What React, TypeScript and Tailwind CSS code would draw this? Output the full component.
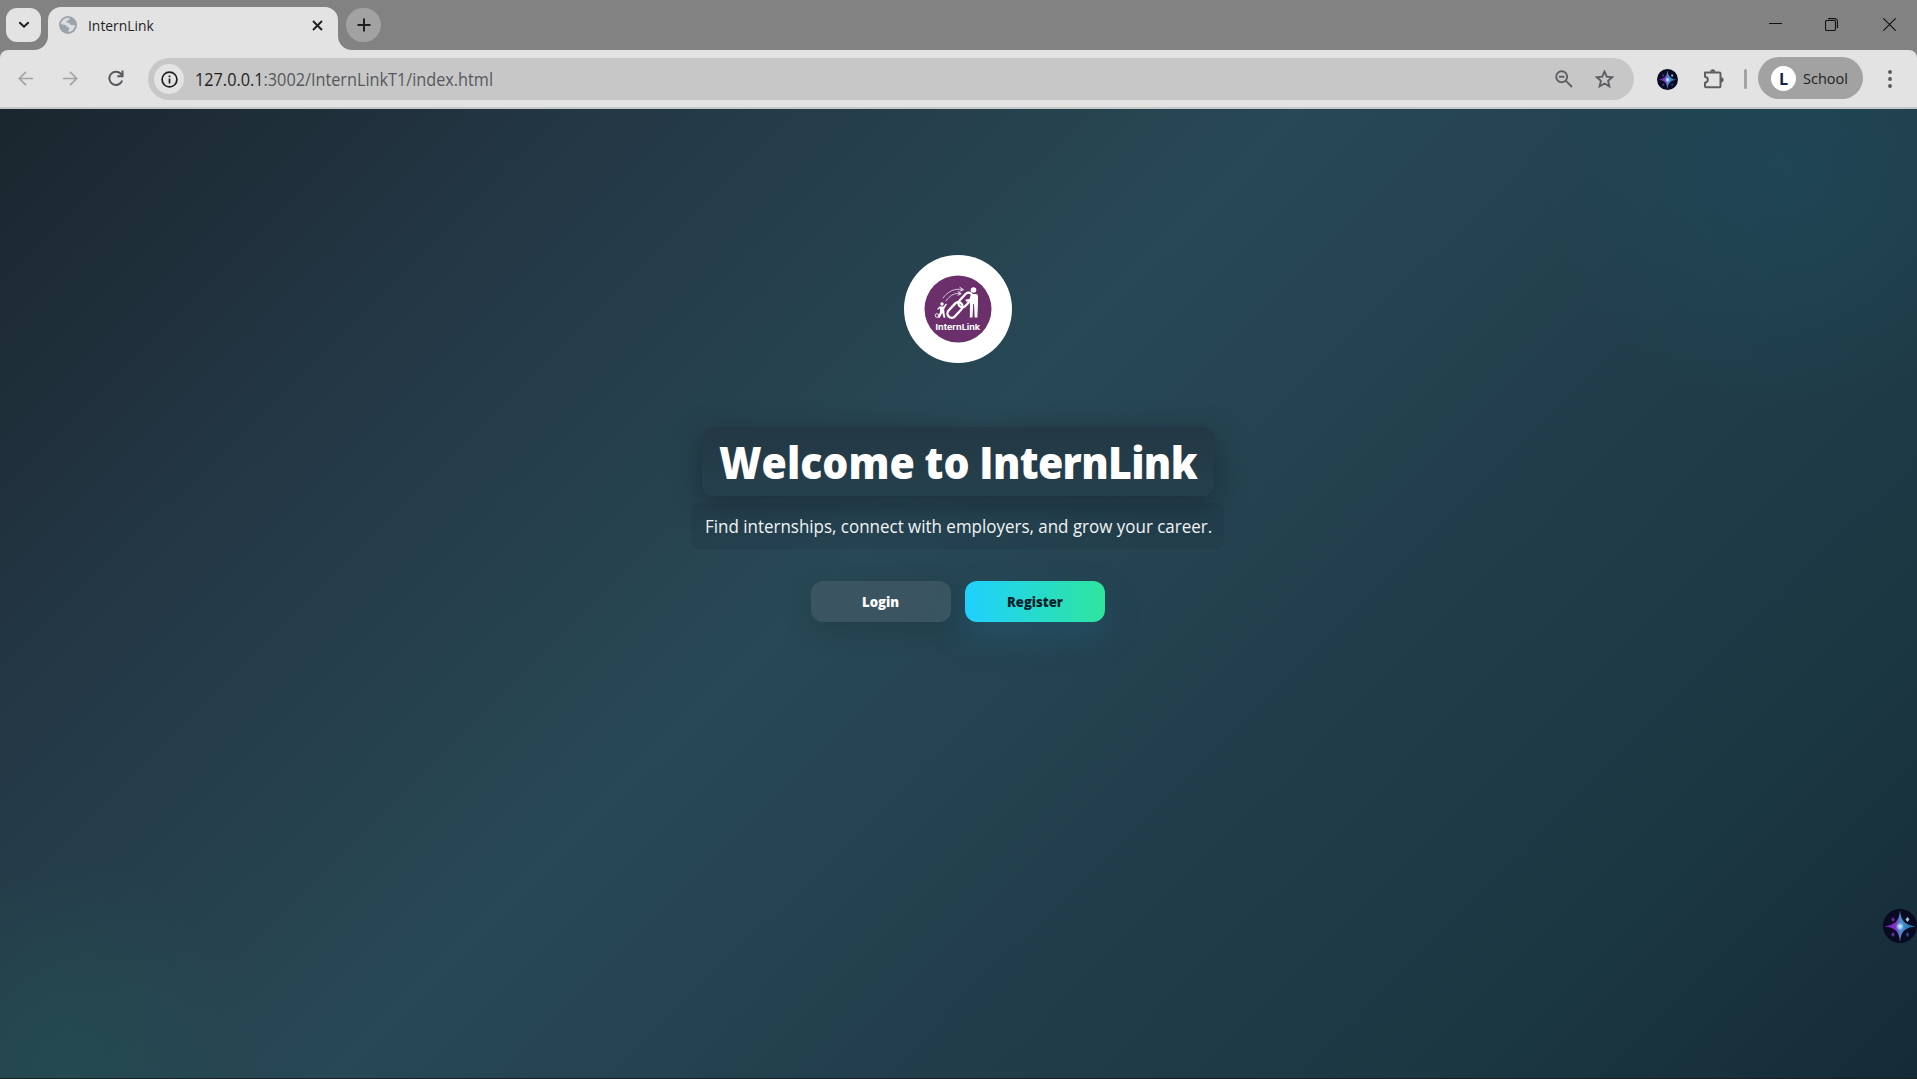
import React from "react";

const UI = "font-['Open_Sans','Noto_Sans',sans-serif]";

// Text fitted to a fixed advance width
function Fit({ w, size, weight, color, children, className = "" }: { w: number; size: number; weight: number; color: string; children: React.ReactNode; className?: string }) {
  const ref = React.useRef<HTMLSpanElement>(null);
  const [scale, setScale] = React.useState(1);
  React.useLayoutEffect(() => {
    const measure = () => ref.current && setScale(w / ref.current.offsetWidth);
    measure();
    document.fonts?.ready.then(measure);
  }, [w]);
  return (
    <span className={`block whitespace-nowrap ${className}`} style={{ width: w }}>
      <span ref={ref} className="inline-block origin-left" style={{ fontSize: size, fontWeight: weight, color, transform: `scaleX(${scale})` }}>
        {children}
      </span>
    </span>
  );
}

function Spark({ size }: { size: number }) {
  return (
    <svg width={size} height={size} viewBox="0 0 34 34" className="block">
      <defs>
        <linearGradient id="spark" x1="0" y1="0" x2="1" y2="0">
          <stop offset="0" stopColor="#7a1fb5" />
          <stop offset=".4" stopColor="#8436c4" />
          <stop offset=".52" stopColor="#4a93c8" />
          <stop offset="1" stopColor="#1a62a8" />
        </linearGradient>
        <radialGradient id="glow">
          <stop offset="0" stopColor="#e0f6ff" />
          <stop offset=".5" stopColor="#9fd4f5" stopOpacity=".8" />
          <stop offset="1" stopColor="#6aa8f0" stopOpacity="0" />
        </radialGradient>
      </defs>
      <circle cx="17" cy="17" r="17" fill="#070a20" />
      <path d="M17 1.500C18 12 22 16 33 17.500C22 18.500 18 22 17 33C16 22 12 18.500 1 17.500C12 16 16 12 17 1.500Z" fill="url(#spark)" />
      <circle cx="17" cy="17.500" r="4.500" fill="url(#glow)" />
      <path d="M10 8l2 2.500-2 2.500-2-2.500zM10 23l2 2.500-2 2.500-2-2.500z" fill="#5a2a90" />
      <path d="M24.500 8l2 2.500-2 2.500-2-2.500z" fill="#9cc4dc" />
      <path d="M24.500 23l2 2.500-2 2.500-2-2.500z" fill="#2e3f8e" />
    </svg>
  );
}

function Logo() {
  return (
    <div className="flex size-[108px] items-center justify-center rounded-full bg-white">
      <svg width="68" height="68" viewBox="0 0 68 68">
        <circle cx="34" cy="34" r="33.500" fill="#6b2f6b" />
        <g fill="none" stroke="#fff" strokeLinecap="round">
          <g transform="translate(41.500 25) rotate(-47)" strokeWidth="2.300">
            <rect x="-8.500" y="-4" width="17" height="8" rx="4" />
          </g>
          <g transform="translate(31 35) rotate(-47)" strokeWidth="2.300">
            <rect x="-9" y="-4.300" width="18" height="8.600" rx="4.300" />
          </g>
          <path d="M19 23C24 16.500 30 13.500 37.500 14.500M22 26C26 20.500 30 18 35.500 18.500" strokeWidth=".7" strokeDasharray="2.500 .7" />
          <path d="M36 12.500l3.500 2.200-3.500 1.500M34 16.800l3.200 1.900-3.200 1.500" strokeWidth=".9" />
          <circle cx="13" cy="40.500" r="1.800" strokeWidth=".9" />
        </g>
        <circle cx="49.500" cy="15" r="2.800" fill="#fff" />
        <path d="M47 19h5q2 0 2 2v7l-.6 14.500h-2.700l-.7-13.500h-.8l-.7 13.500h-2.700L46 27l-4-.5-.5-2 4-.5z" fill="#fff" />
        <circle cx="18" cy="29" r="1.700" fill="#fff" />
        <path d="M15.500 31.500h4l2.500-3 .9.800-2.700 4.700.2 3.500 1 5.300h-1.800l-1.400-5-2.400 5H14l2-6v-3.500l-2 1.500-.8-.8z" fill="#fff" />
        <text x="33.800" y="54.500" textAnchor="middle" fill="#fff" fontFamily="Inter, Lato, sans-serif" fontWeight="700" fontSize="7.800" textLength="44.500" lengthAdjust="spacingAndGlyphs">InternLink</text>
      </svg>
    </div>
  );
}

function TabStrip() {
  return (
    <div className="flex h-[50px] w-full bg-[#828282]">
      <button className="mt-2 ml-1.5 flex h-[34px] w-[35px] items-center justify-center rounded-[11px] bg-[#e3e3e3]">
        <svg width="12" height="8" viewBox="0 0 12 8" fill="none" stroke="#1f1f1f" strokeWidth="2"><path d="M1.300 1.200 6 5.700l4.700-4.500" /></svg>
      </button>
      <div className="relative mt-[7px] ml-[7px] flex h-[43px] w-[290px] items-start rounded-t-[13px] bg-[#e3e3e3]">
        <svg className="absolute bottom-0 -left-[14px]" width="14" height="14"><path d="M14 0v14H0A14 14 0 0 0 14 0z" fill="#e3e3e3" /></svg>
        <svg className="absolute -right-[14px] bottom-0" width="14" height="14"><path d="M0 0v14h14A14 14 0 0 1 0 0z" fill="#e3e3e3" /></svg>
        <svg className="mt-[9px] ml-[11px]" width="18" height="18" viewBox="0 0 18 18">
          <circle cx="9" cy="9" r="9" fill="#9aa2ab" />
          <path d="M9.500 1.800c1.700.3 1.400 1.300.2 1.900-.8.400-.5 1.300-1.500 1.500-1 .2-1.400.7-.6 1.300.9.600 3.200.2 3.700 1.700.4 1.200 1.700.8 3.400.7l1.300.3c-.3 3.500-2.700 6.200-6 6.800l-.7-1c-.2-1 1-1.500 1-2.600 0-1.200-1.500-1.100-2.200-1.700-.8-.7-.6-1.500-1.900-1.700L2 8.300C2.200 4.700 5.500 1.700 9.500 1.800z" fill="#dadcdf" />
        </svg>
        <div className="ml-[11px] flex h-9 items-center"><Fit w={66} size={14.500} weight={400} color="#1f1f1f">InternLink</Fit></div>
        <svg className="mt-[13px] ml-[158px]" width="11" height="11" viewBox="0 0 11 11" stroke="#1f1f1f" strokeWidth="1.900"><path d="m1 1 9 9m0-9-9 9" /></svg>
      </div>
      <button className="mt-2 ml-2 flex h-[34px] w-[35px] items-center justify-center rounded-full bg-[#a2a2a2]">
        <svg width="14" height="14" viewBox="0 0 14 14" stroke="#1f1f1f" strokeWidth="2"><path d="M7 .5v13M.5 7h13" /></svg>
      </button>
      <div className="mt-4 mr-[21px] ml-auto flex items-start">
        <svg className="mt-[7px]" width="13" height="1"><path d="M0 .5h13" stroke="#111" /></svg>
        <svg className="mt-[2px] ml-[43px]" width="13" height="13" viewBox="0 0 13 13" fill="none" stroke="#111" strokeWidth="1.100"><rect x=".5" y="2.500" width="10" height="10" rx="1.500" /><path d="M3 .6h6.500a3 3 0 0 1 3 3V10" /></svg>
        <svg className="mt-[2px] ml-[45px]" width="13" height="13" viewBox="0 0 13 13" stroke="#111" strokeWidth="1.100"><path d="m.3.3 12.400 12.400m0-12.400L.3 12.700" /></svg>
      </div>
    </div>
  );
}

function Toolbar() {
  return (
    <div className="h-[59px] bg-[#828282]">
      <div className="flex h-full items-start rounded-t-[8px] border-b-2 border-[#c5c7c7] bg-[#e3e3e3]">
        <svg className="mt-[21px] ml-[18px]" width="15" height="15" viewBox="0 0 15 15" fill="none" stroke="#a3a3a3" strokeWidth="1.700"><path d="M15 7.500H1.500M8 .8 1.300 7.500 8 14.200" /></svg>
        <svg className="mt-[21px] ml-[30px]" width="15" height="15" viewBox="0 0 15 15" fill="none" stroke="#a3a3a3" strokeWidth="1.700"><path d="M0 7.500h13.500M7 .8l6.700 6.700L7 14.200" /></svg>
        <svg className="mt-[20px] ml-[30px]" width="16" height="17" viewBox="0 0 16 17" fill="none" stroke="#54585c" strokeWidth="2"><path d="M14.200 10.500A6.600 6.600 0 1 1 12.800 3.800L14.500 5.500" /><path d="M14.500 .5v5.700H9.300" /></svg>
        <div className="mt-2 ml-6 flex h-[42px] w-[1486px] items-center rounded-full bg-[#c7c7c7]">
          <div className="ml-[6px] flex size-[30px] items-center justify-center rounded-full bg-[#e3e3e3]">
            <svg width="17" height="17" viewBox="0 0 17 17" fill="none" stroke="#1f1f1f" strokeWidth="1.700"><circle cx="8.500" cy="8.500" r="7.400" /><path d="M8.500 7.500v5M8.500 4.500v1.800" /></svg>
          </div>
          <div className="ml-[11px] pt-px"><Fit w={298} size={17.500} weight={400} color="#55585c"><span className="text-[#1f1f1f]">127.0.0.1</span>:3002/InternLinkT1/index.html</Fit></div>
          <svg className="ml-auto" width="18" height="18" viewBox="0 0 18 18" fill="none" stroke="#5c5f62" strokeWidth="1.900"><circle cx="6.700" cy="6.700" r="5.500" /><path d="m10.700 10.700 6.300 6.300M4 6.700h5.400" /></svg>
          <svg className="mr-5 ml-[22px]" width="19" height="18" viewBox="0 0 19 18" fill="none" stroke="#5c5f62" strokeWidth="1.900"><path d="m9.500 1.500 2.200 5.200 5.600.5-4.200 3.700 1.300 5.500-4.900-2.900-4.900 2.900 1.300-5.500-4.200-3.700 5.600-.5z" /></svg>
        </div>
        <div className="mt-[19px] ml-[23px]"><Spark size={21} /></div>
        <svg className="mt-[18px] ml-[25px]" width="22" height="22" viewBox="0 0 22 22">
          <path d="M2 4.500h14.500q1 0 1 1v12.800q0 1-1 1H3q-1 0-1-1v-3.600c3.800-.7 3.800-5.200 0-5.900z" fill="none" stroke="#5c5f62" strokeWidth="2" strokeLinejoin="round" />
          <path d="M7.200 3.800a2.600 2.600 0 0 1 5.200 0zM18 9.200a2.600 2.600 0 0 1 0 5.200z" fill="#5c5f62" />
        </svg>
        <div className="mt-[19px] ml-[19px] h-5 w-[3px] rounded-full bg-[#a2a2a2]" />
        <div className="mt-[7px] ml-[11px] flex h-[42px] w-[105px] items-center rounded-full bg-[#a2a2a2] pl-[13px]">
          <div className="flex size-[25px] items-center justify-center rounded-full bg-white text-[16px] font-bold text-[#18224a]"><span className="mt-px">L</span></div>
          <div className="ml-[7px]"><Fit w={45} size={14.500} weight={400} color="#1f1f1f">School</Fit></div>
        </div>
        <svg className="mt-[19px] ml-[24px]" width="6" height="20" fill="#54585c"><circle cx="3" cy="3" r="1.900" /><circle cx="3" cy="10" r="1.900" /><circle cx="3" cy="17" r="1.900" /></svg>
      </div>
    </div>
  );
}

export default function App() {
  return (
    <div className={`flex h-[1079px] w-[1917px] flex-col overflow-hidden ${UI}`}>
      <TabStrip />
      <Toolbar />
      <main className="relative flex flex-1 flex-col items-center border-b border-[#1c1f22] bg-[radial-gradient(circle_at_1785px_60px,rgba(30,76,92,0.5)_0,rgba(30,76,92,0.38)_90px,rgba(30,76,92,0)_240px),radial-gradient(circle_at_60px_950px,rgba(35,80,82,0.6)_0,rgba(35,80,82,0)_200px),linear-gradient(135deg,#1a262e_0%,#243846_22%,#284855_45%,#223e4c_64%,#1b3742_84%,#152b38_100%)] pr-[2px]">
        <div className="mt-[146px]"><Logo /></div>
        <h1 className="relative mt-[64px] flex h-[69px] w-[512px] items-center justify-center rounded-xl bg-[linear-gradient(to_bottom,#233844,#25404d)] pt-[3px] shadow-[0_8px_28px_rgba(20,30,40,0.55)]">
          <Fit w={478} size={43.5} weight={800} color="#fff" className="leading-none [word-spacing:-1px]">Welcome to <span className="tracking-[-0.7px]">InternLink</span></Fit>
        </h1>
        <p className="relative mt-[7px] flex h-[46px] w-[533px] items-center justify-center rounded-lg bg-[#102030]/10 pl-px">
          <Fit w={507} size={18} weight={400} color="#f0f3f4">Find internships, connect with employers, and grow your career.</Fit>
        </p>
        <div className="mt-8 flex gap-[14px]">
          <button className="flex h-[41px] w-[140px] items-center justify-center rounded-xl bg-[#3a5561] pb-px shadow-[0_8px_24px_rgba(20,40,50,0.28)]">
            <Fit w={37} size={13.5} weight={800} color="#fff">Login</Fit>
          </button>
          <button className="flex h-[41px] w-[140px] items-center justify-center rounded-xl bg-[linear-gradient(90deg,#1fd0ff,#2ee59d)] pb-px shadow-[0_16px_32px_rgba(33,95,130,0.4)]">
            <Fit w={56} size={13.5} weight={800} color="#06222b">Register</Fit>
          </button>
        </div>
        <div className="absolute top-[800px] right-0"><Spark size={34} /></div>
      </main>
    </div>
  );
}
